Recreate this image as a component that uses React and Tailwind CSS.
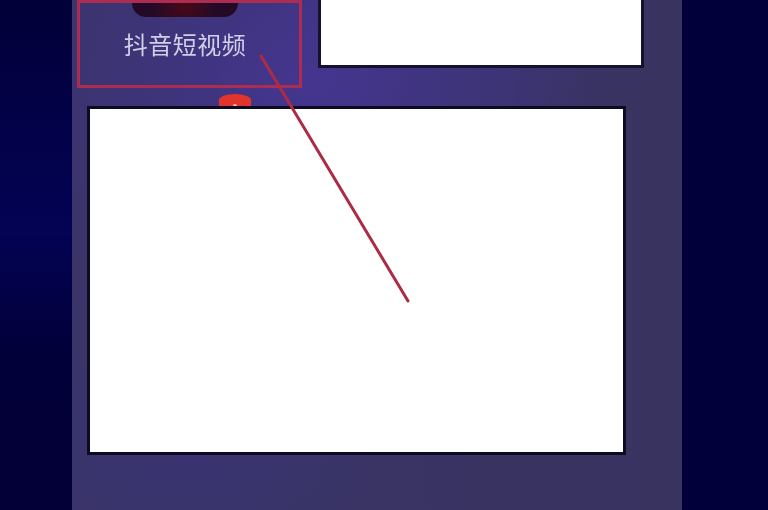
import React from "react";

export default function App() {
  return (
    <div className="relative flex h-[510px] w-[768px] overflow-hidden bg-[#02003a] font-['Noto_Sans_CJK_SC','Noto_Sans',sans-serif]">
      <div className="w-[72px] shrink-0 bg-[linear-gradient(180deg,#020038_0%,#030254_45%,#020038_70%,#020036_100%)]" />

      <div className="w-[610px] shrink-0 bg-[radial-gradient(ellipse_300px_260px_at_240px_80px,#45358f_0%,#3d3479_55%,transparent_100%),radial-gradient(ellipse_200px_120px_at_120px_440px,#383372_0%,transparent_100%),linear-gradient(90deg,#3a3468,#38335f)]">
        <div className="flex h-[88px] items-start pl-[5px]">
          <div className="flex h-[88px] w-[225px] shrink-0 flex-col items-center border-[3px] border-[#ac2c52] pr-[9px] blur-[0.4px]">
            <div className="h-[14px] w-[106px] rounded-b-[22px] bg-[radial-gradient(circle_at_50%_0%,#4a0818,#240a26_60%)]" />
            <div className="mt-[12px] whitespace-nowrap text-[24px] leading-[30px] tracking-[0.5px] text-[#cfcfe6] blur-[0.6px]">抖音短视频</div>
          </div>
          <div className="ml-[16px] h-[68px] w-[326px] shrink-0 border-x-[3px] border-b-[3px] border-[#14122f] bg-white blur-[0.4px]" />
        </div>

        <div className="relative mt-[18px] ml-[15px] h-[349px] w-[539px] border-[3px] border-[#0c0b22] bg-white">
          <div className="absolute left-[129px] top-[-15px] flex h-[12px] w-[32px] items-end justify-center rounded-t-[50%] bg-[#e0342c] blur-[0.6px]">
            <div className="h-[2px] w-[4px] rounded-t-full bg-[#f3c9c0]" />
          </div>
        </div>
      </div>

      <div className="flex-1 bg-[#02003a]" />

      <svg className="absolute left-0 top-0 h-[510px] w-[768px]" viewBox="0 0 768 510" fill="none">
        <line x1="261" y1="56" x2="408" y2="301" stroke="#ac2c44" strokeWidth="3" strokeLinecap="round" />
      </svg>
    </div>
  );
}
